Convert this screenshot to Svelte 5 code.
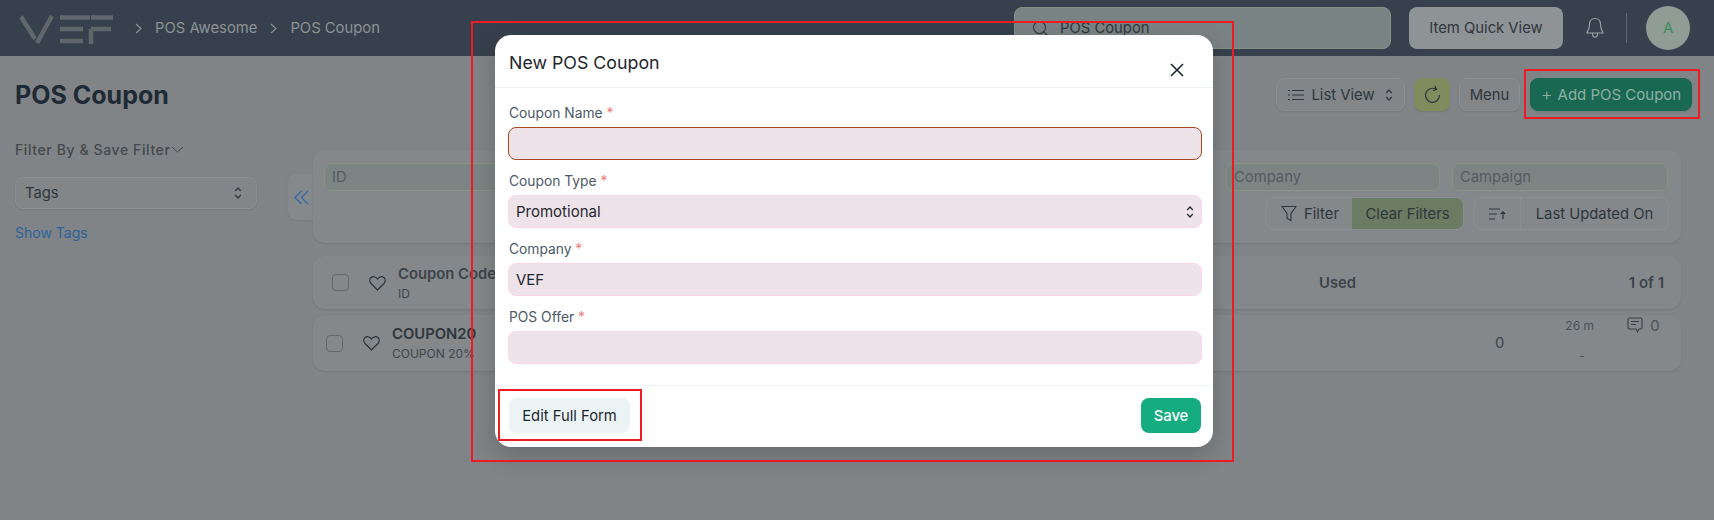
<script>
  const fields = [
    { label: 'Coupon Name', value: '', focus: true },
    { label: 'Coupon Type', value: 'Promotional', select: true },
    { label: 'Company', value: 'VEF' },
    { label: 'POS Offer', value: '' },
  ];
</script>

{#snippet updown(color)}
  <svg class="updown" width="8" height="14" viewBox="0 0 8 14" fill="none" stroke={color} stroke-width="1.2">
    <path d="M1.2 5 4 2l2.8 3M1.2 9 4 12l2.8-3" />
  </svg>
{/snippet}

{#snippet heart()}
  <svg class="heart" width="17" height="16" viewBox="0 0 17 16" fill="none" stroke="#2b3136" stroke-width="1.1">
    <path d="M8.5 15 2 8.5C.3 6.700.4 3.900 2 2.500c1.700-1.500 4.500-1.200 6.500 1.500 2-2.700 4.800-3 6.500-1.500 1.600 1.400 1.700 4.200 0 6z" />
  </svg>
{/snippet}

<div class="page">
  <header class="navbar">
    <svg class="logo" width="94" height="29" viewBox="0 0 94 29" fill="none" stroke="#5f676b" stroke-width="4.5">
      <path d="M1 1.500 15 24M17 28 32 1" />
      <path d="M40 2.500h30M40 14h23M40 26h23" />
      <path d="M71 2.500h22M71 14h20M71 14v15" />
    </svg>
    <nav class="crumbs">
      <svg width="7" height="11" viewBox="0 0 7 11" fill="none" stroke="#8d9295" stroke-width="1.1"><path d="m1 1 5 4.500-5 4.500" /></svg>
      <span>POS Awesome</span>
      <svg width="7" height="11" viewBox="0 0 7 11" fill="none" stroke="#8d9295" stroke-width="1.1"><path d="m1 1 5 4.500-5 4.500" /></svg>
      <span>POS Coupon</span>
    </nav>
    <div class="search">
      <svg width="17" height="17" viewBox="0 0 17 17" fill="none" stroke="#2f363d" stroke-width="1.1"><circle cx="7.500" cy="7.500" r="6" /><path d="m12 12 4 4" /></svg>
      <span>POS Coupon</span>
    </div>
    <div class="quick">Item Quick View</div>
    <svg class="bell" width="18" height="22" viewBox="0 0 18 22" fill="none" stroke="#9a9fa1" stroke-width="1.200">
      <path d="M9 1.500c-3.500 0-5.500 2.500-5.500 6 0 5-2.500 7-2.500 8.500h16c0-1.500-2.500-3.500-2.500-8.500 0-3.500-2-6-5.500-6zM6.500 16.500c0 5 5 5 5 0" />
    </svg>
    <div class="nav-divider"></div>
    <div class="avatar">A</div>
  </header>

  <section class="page-head">
    <h1>POS Coupon</h1>
    <div class="actions">
      <div class="btn list-view">
        <svg width="16" height="12" viewBox="0 0 16 12" fill="none" stroke="#2f363d" stroke-width="1.100"><path d="M4 1.500h12M4 6h12M4 10.500h12M0 1.500h2M0 6h2M0 10.500h2" /></svg>
        <span>List View</span>
        {@render updown('#2f363d')}
      </div>
      <div class="btn refresh">
        <svg width="17" height="19" viewBox="0 0 17 19" fill="none" stroke="#2f363d" stroke-width="1.200"><path d="M12 4.200A7 7 0 1 0 15.500 10M11 .8l1.500 3.600-3.500 1.300" /></svg>
      </div>
      <div class="btn menu">Menu</div>
      <div class="btn add"><span class="plus">+</span> Add POS Coupon</div>
    </div>
  </section>

  <div class="body">
    <aside class="sidebar">
      <div class="filter-by">Filter By &amp; Save Filter
        <svg width="13" height="7" viewBox="0 0 13 7" fill="none" stroke="#45494d" stroke-width="1"><path d="m1 1 5.500 5L12 1" /></svg>
      </div>
      <div class="tags">
        <span>Tags</span>
        {@render updown('#2f363d')}
      </div>
      <div class="show-tags">Show Tags</div>
    </aside>

    <div class="toggle">
      <svg width="15" height="15" viewBox="0 0 15 15" fill="none" stroke="#2f6aa8" stroke-width="1.300"><path d="M7.500 1 1 7.500 7.500 14M14 1 7.500 7.500 14 14" /></svg>
    </div>

    <main class="content">
      <div class="card filters">
        <div class="filter-inputs">
          <div class="fake-input id">ID</div>
          <div class="fake-input company">Company</div>
          <div class="fake-input campaign">Campaign</div>
        </div>
        <div class="filter-actions">
          <div class="group">
            <div class="seg filter-seg">
              <svg width="16" height="17" viewBox="0 0 16 17" fill="none" stroke="#2f363d" stroke-width="1.100"><path d="M1 1.500h14L10 8.500v7l-4-2v-5z" /></svg>
              Filter
            </div>
            <div class="seg clear">Clear Filters</div>
          </div>
          <div class="group">
            <div class="seg sort-seg">
              <svg width="17" height="12" viewBox="0 0 17 12" fill="none" stroke="#2f363d" stroke-width="1.200"><path d="M0 1h11M0 6h8M0 11h6M14 11V4M11.800 6 14 3.800 16.200 6" /></svg>
            </div>
            <div class="seg updated">Last Updated On</div>
          </div>
        </div>
      </div>

      <div class="card list-head">
        <span class="check"></span>
        {@render heart()}
        <div class="name-col">
          <strong>Coupon Code</strong>
          <small>ID</small>
        </div>
        <strong class="used">Used</strong>
        <strong class="count">1 of 1</strong>
      </div>

      <div class="card row">
        <span class="check"></span>
        {@render heart()}
        <div class="name-col">
          <strong>COUPON20</strong>
          <small>COUPON 20%</small>
        </div>
        <span class="used-val">0</span>
        <div class="meta">
          <span>26 m</span>
          <span>-</span>
        </div>
        <div class="comments">
          <svg width="16" height="16" viewBox="0 0 16 16" fill="none" stroke="#3a3f44" stroke-width="1.100"><path d="M2.500 1h11A1.500 1.500 0 0 1 15 2.500v8a1.500 1.500 0 0 1-1.500 1.500H12l-1.500 3-1.500-3H2.500A1.500 1.500 0 0 1 1 10.500v-8A1.500 1.500 0 0 1 2.500 1zM4 4.500h8M4 7.500h5" /></svg>
          <span>0</span>
        </div>
      </div>
    </main>
  </div>

  <div class="modal">
    <div class="modal-head">
      <h4>New POS Coupon</h4>
      <svg class="close" width="14" height="14" viewBox="0 0 14 14" fill="none" stroke="#1f272e" stroke-width="1.600"><path d="m1 1 12 12M13 1 1 13" /></svg>
    </div>
    <div class="modal-body">
      {#each fields as f}
        <div class="field">
          <div class="label">{f.label} <span class="req">*</span></div>
          <div class="control" class:focus={f.focus}>
            <span>{f.value}</span>
            {#if f.select}{@render updown('#1f272e')}{/if}
          </div>
        </div>
      {/each}
    </div>
    <div class="modal-foot">
      <div class="edit-full">Edit Full Form</div>
      <div class="save">Save</div>
    </div>
  </div>

  <!-- red annotation boxes from the screenshot -->
  <div class="mark mark-modal"></div>
  <div class="mark mark-add"></div>
  <div class="mark mark-edit"></div>
</div>

<style>
  :global(body) {
    margin: 0;
    background: #808486;
    font-family: Inter, "Noto Sans", sans-serif;
    overflow: hidden;
  }
  .page {
    position: relative;
    height: 520px;
    background: #808486;
    color: #2f363d;
    font-size: 14.8px;
  }
  .navbar {
    height: 56px;
    box-sizing: border-box;
    background: #36414d;
    display: flex;
    align-items: center;
    padding: 0 24px 0 20px;
  }
  .logo {
    flex: none;
    margin-top: 2px;
  }
  .crumbs {
    display: flex;
    align-items: center;
    gap: 13px;
    margin-left: 21px;
    color: #8d9295;
  }
  .search {
    margin-left: auto;
    width: 377px;
    height: 42px;
    box-sizing: border-box;
    display: flex;
    align-items: center;
    gap: 11px;
    padding-left: 17px;
    border: 1px solid #869080;
    border-radius: 8px;
    background: #7a8384;
    color: #30373d;
  }
  .quick {
    margin-left: 18px;
    width: 154px;
    height: 42px;
    display: flex;
    align-items: center;
    justify-content: center;
    border-radius: 8px;
    background: #8e9395;
    color: #2f363d;
  }
  .bell {
    margin-left: 23px;
  }
  .nav-divider {
    margin-left: 22px;
    width: 1px;
    height: 30px;
    background: #5f676b;
  }
  .avatar {
    margin-left: 19px;
    width: 44px;
    height: 44px;
    border-radius: 50%;
    background: #8f9d95;
    color: #3d8a5c;
    display: flex;
    align-items: center;
    justify-content: center;
  }

  .page-head {
    height: 72px;
    display: flex;
    align-items: center;
    padding: 0 22px 0 15px;
    justify-content: space-between;
  }
  h1 {
    margin: 5px 0 0;
    font-size: 25px;
    font-weight: 700;
    color: #1e2a35;
  }
  .actions {
    display: flex;
    align-items: center;
    gap: 9px;
    margin-top: 5px;
  }
  .btn {
    height: 33px;
    box-sizing: border-box;
    display: flex;
    align-items: center;
    justify-content: center;
    border-radius: 8px;
    border: 1px solid #8b8f91;
    background: #828688;
    box-shadow: 0 1px 2px rgba(0, 0, 0, 0.08);
  }
  .list-view {
    width: 129px;
    gap: 7px;
  }
  .list-view .updown {
    margin-left: 3px;
  }
  .refresh {
    width: 36px;
    background: #808c5e;
    border-color: #808c5e;
  }
  .menu {
    width: 61px;
  }
  .add {
    width: 162px;
    margin-left: 1px;
    gap: 5px;
    background: #186852;
    border-color: #186852;
    color: #8fafa2;
    font-size: 15px;
  }
  .plus {
    font-size: 18px;
    font-weight: 300;
    line-height: 1;
  }

  .body {
    display: flex;
    align-items: flex-start;
    padding-left: 15px;
  }
  .sidebar {
    width: 242px;
    padding-top: 11px;
    flex: none;
  }
  .filter-by {
    display: flex;
    align-items: center;
    gap: 1px;
    height: 20px;
    letter-spacing: 0.6px;
    font-size: 14px;
    font-weight: 500;
    color: #45494d;
  }
  .tags {
    margin-top: 18px;
    height: 32px;
    box-sizing: border-box;
    display: flex;
    align-items: center;
    justify-content: space-between;
    padding: 0 14px 0 9px;
    border-radius: 8px;
    border: 1px solid #8b8f91;
    box-shadow: 0 1px 2px rgba(0, 0, 0, 0.08);
    background: #828688;
  }
  .show-tags {
    margin-top: 15px;
    color: #2c639e;
    font-size: 14px;
  }
  .toggle {
    flex: none;
    margin: 46px 0 0 31px;
    width: 25px;
    height: 46px;
    box-sizing: border-box;
    display: flex;
    align-items: center;
    padding-left: 6px;
    background: #85898b;
    border-radius: 8px 0 0 8px;
    box-shadow: 0 1px 2px rgba(0, 0, 0, 0.08);
  }
  .content {
    width: 1368px;
    margin-top: 22px;
    display: flex;
    flex-direction: column;
    gap: 6px;
  }
  .card {
    border-radius: 12px;
    background: #84888a;
    box-shadow: 0 1px 2px rgba(0, 0, 0, 0.1);
  }
  .filters {
    height: 93px;
    box-sizing: border-box;
    padding: 13px 12px 0 11px;
    margin-bottom: 7px;
  }
  .filter-inputs {
    display: flex;
    gap: 12px;
  }
  .fake-input {
    height: 28px;
    box-sizing: border-box;
    display: flex;
    align-items: center;
    padding-left: 7px;
    border-radius: 8px;
    border: 1px solid #87947f;
    background: #7c8584;
    color: #545b5f;
  }
  .id {
    width: 890px;
  }
  .company {
    width: 214px;
  }
  .campaign {
    width: 216px;
  }
  .filter-actions {
    display: flex;
    justify-content: flex-end;
    gap: 10px;
    margin-top: 6px;
  }
  .group {
    display: flex;
    height: 33px;
    box-sizing: border-box;
    border: 1px solid #8b8f91;
    border-radius: 8px;
    overflow: hidden;
  }
  .seg {
    display: flex;
    align-items: center;
    box-sizing: border-box;
    gap: 7px;
  }
  .filter-seg {
    padding-left: 14px;
    width: 85px;
  }
  .sort-seg {
    border-right: 1px solid #8b8f91;
    width: 46px;
    padding-left: 14px;
  }
  .updated {
    width: 147px;
    justify-content: center;
  }
  .clear {
    width: 111px;
    justify-content: center;
    background: #6b7c62;
  }
  .list-head,
  .row {
    display: flex;
    align-items: center;
    position: relative;
  }
  .list-head {
    height: 53px;
    padding-left: 19px;
  }
  .row {
    height: 56px;
    padding-left: 13px;
  }
  .check {
    flex: none;
    width: 17px;
    height: 17px;
    box-sizing: border-box;
    border: 1px solid #63686b;
    border-radius: 4px;
    margin-right: 20px;
  }
  .heart {
    flex: none;
    margin-right: 12px;
  }
  .name-col {
    display: flex;
    flex-direction: column;
    gap: 4px;
    width: 900px;
    color: #2f363d;
  }
  .name-col strong {
    font-size: 14.8px;
    font-weight: 600;
    line-height: 18px;
  }
  .list-head .name-col strong {
    color: #3d444a;
  }
  .name-col small {
    font-size: 12px;
    color: #3f464c;
    line-height: 14px;
  }
  .used {
    margin-left: 21px;
    color: #3d444a;
    font-weight: 600;
  }
  .count {
    margin-left: auto;
    margin-right: 17px;
    color: #3d444a;
    font-weight: 600;
    font-size: 15px;
  }
  .used-val {
    margin-left: 203px;
    color: #3f464c;
  }
  .meta {
    margin-left: 61px;
    align-self: flex-start;
    padding-top: 3px;
    width: 62px;
    display: flex;
    flex-direction: column;
    gap: 15px;
    font-size: 12px;
    color: #4b5156;
  }
  .meta span:last-child {
    margin-left: 14px;
  }
  .comments {
    align-self: flex-start;
    display: flex;
    gap: 7px;
    padding-top: 2px;
    color: #4b5156;
  }

  .modal {
    position: absolute;
    left: 495px;
    top: 35px;
    width: 718px;
    height: 412px;
    background: #fff;
    border-radius: 16px;
    box-shadow: 0 8px 24px rgba(0, 0, 0, 0.2);
    display: flex;
    flex-direction: column;
    color: #1f272e;
  }
  .modal-head {
    height: 53px;
    box-sizing: border-box;
    border-bottom: 1px solid #f1f2f3;
    padding: 2px 14px 0;
    position: relative;
    display: flex;
    align-items: center;
  }
  h4 {
    margin: 0;
    font-size: 17.8px;
    font-weight: 400;
  }
  .close {
    position: absolute;
    right: 29px;
    top: 28px;
  }
  .modal-body {
    flex: 1;
    padding: 15px 11px 0 13px;
    display: flex;
    flex-direction: column;
    gap: 11px;
  }
  .label {
    height: 20px;
    line-height: 20px;
    padding-left: 1px;
    margin-bottom: 4px;
    color: #4c5a67;
    font-size: 13.8px;
  }
  .req {
    color: #f47a7a;
  }
  .control {
    height: 33px;
    box-sizing: border-box;
    display: flex;
    align-items: center;
    justify-content: space-between;
    padding: 0 7px;
    border: 1px solid #fdd5e8;
    border-radius: 8px;
    background: #efe3ea;
    font-size: 15px;
    color: #1f272e;
  }
  .control.focus {
    border-color: #a5481f;
  }
  .modal-foot {
    height: 62px;
    box-sizing: border-box;
    border-top: 1px solid #f1f2f3;
    display: flex;
    justify-content: space-between;
    padding: 12px 12px 0 14px;
  }
  .edit-full,
  .save {
    height: 35px;
    display: flex;
    align-items: center;
    justify-content: center;
    border-radius: 8px;
  }
  .edit-full {
    width: 121px;
    background: #ebf3f5;
  }
  .save {
    width: 60px;
    background: #15ad80;
    color: #fff;
    font-weight: 500;
  }

  .mark {
    position: absolute;
    box-sizing: border-box;
    border: 2px solid #ed1c24;
    pointer-events: none;
  }
  .mark-modal {
    left: 471px;
    top: 21px;
    width: 763px;
    height: 441px;
  }
  .mark-add {
    left: 1524px;
    top: 69px;
    width: 176px;
    height: 50px;
  }
  .mark-edit {
    left: 498px;
    top: 389px;
    width: 144px;
    height: 52px;
  }
</style>
